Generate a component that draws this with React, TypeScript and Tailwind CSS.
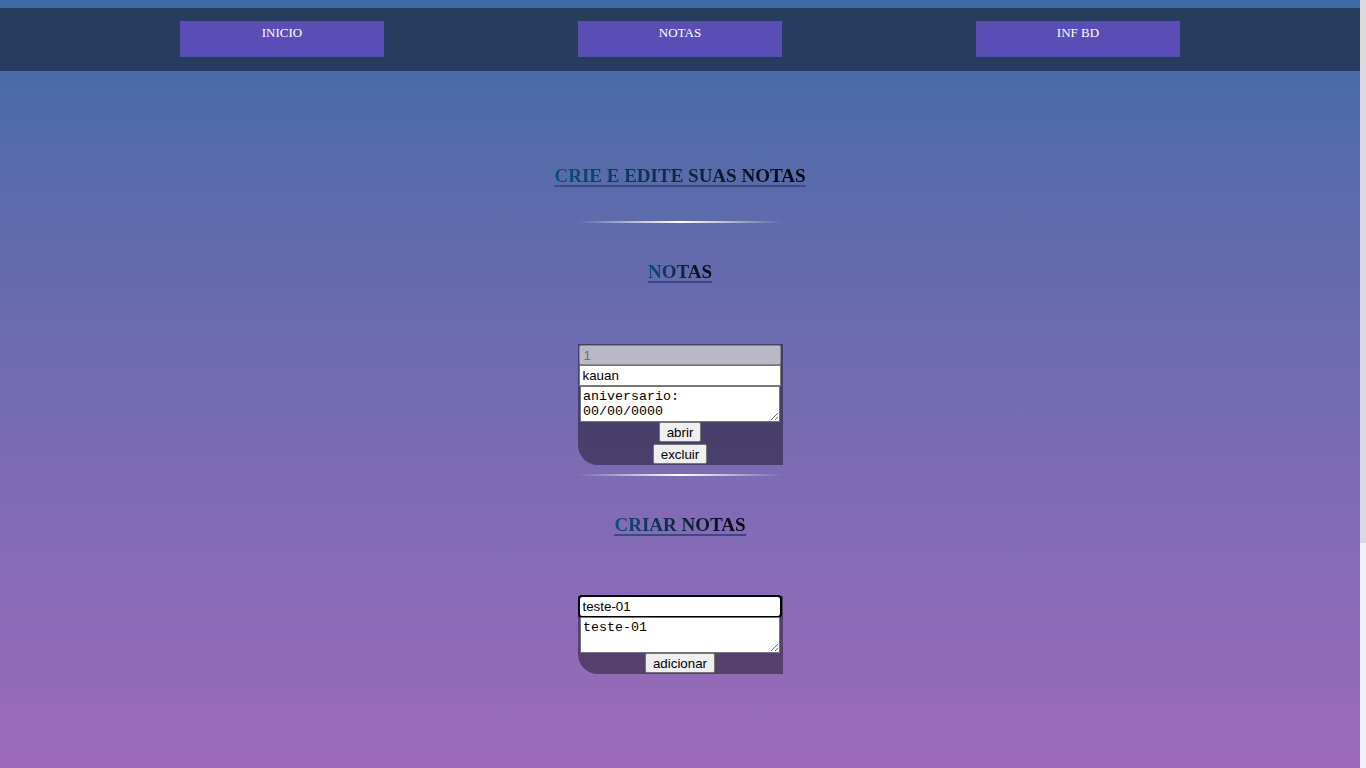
import { useState } from "react";

const NavButton = ({ text }: { text: string }) => (
  <button className="w-[204px] h-[36px] bg-[#5a4db5] text-white text-[13px] leading-[15px] pt-[4px] flex justify-center items-start font-['Liberation_Serif',serif]">
    {text}
  </button>
);

const Title = ({ text, className }: { text: string; className?: string }) => (
  <div className={`flex justify-center ${className ?? ""}`}>
    <h3 className="inline-block font-bold text-[19px] leading-[22px] font-['Liberation_Serif',serif] bg-linear-to-r from-[#0a4f78] to-[#05060f] bg-clip-text text-transparent underline decoration-[#3a4884] decoration-[2px] underline-offset-[3px]">
      {text}
    </h3>
  </div>
);

const Rule = ({ className }: { className?: string }) => (
  <div className={`flex justify-center ${className ?? ""}`}>
    <div className="w-[204px] h-[2px] bg-linear-to-r from-transparent via-white to-transparent" />
  </div>
);

const SmallButton = ({ text }: { text: string }) => (
  <button className="h-[20px] px-[7px] pt-[1px] bg-[#efefef] border border-[#767676] rounded-[2px] text-[13.33px] leading-[16px] text-black font-['Liberation_Sans',Arial,sans-serif]">
    {text}
  </button>
);

export default function App() {
  const [nome, setNome] = useState("teste-01");
  const [texto, setTexto] = useState("teste-01");

  return (
    <div className="flex min-h-screen w-full">
      <div className="flex-1 min-h-[768px] bg-linear-to-b from-[#3f6aa6] to-[#9c6abb] pt-[8px] pb-[94px]">
        <nav className="h-[63px] bg-[#263d5f] flex justify-center items-start gap-[194px] pt-[13px]">
          <NavButton text="INICIO" />
          <NavButton text="NOTAS" />
          <NavButton text="INF BD" />
        </nav>

        <Title text="CRIE E EDITE SUAS NOTAS" className="mt-[94px]" />
        <Rule className="mt-[34px]" />
        <Title text="NOTAS" className="mt-[38px]" />

        <div className="flex justify-center mt-[61px]">
          <div className="w-[205px] bg-black/40 rounded-bl-[20px] flex flex-col items-center pt-[1px] pb-[1px] font-['Liberation_Sans',Arial,sans-serif]">
            <input
              disabled
              value="1"
              className="w-[202px] h-[20px] bg-[#b9b9c6] border border-[#8a8a96] rounded-[2px] px-[4px] text-[13.33px] text-[#6d6d6d] self-start ml-[1px]"
            />
            <input
              defaultValue="kauan"
              className="w-[202px] h-[21px] bg-white border border-[#767676] px-[3px] text-[13.33px] text-black self-start ml-[1px]"
            />
            <textarea
              defaultValue={"aniversario:\n00/00/0000"}
              className="w-[200px] h-[36px] bg-white border border-[#767676] px-[2px] pt-[2px] text-[13.33px] leading-[15px] text-black font-['Liberation_Mono',monospace] resize-y overflow-hidden"
            />
            <div className="flex flex-col items-center gap-[2px]">
              <SmallButton text="abrir" />
              <SmallButton text="excluir" />
            </div>
          </div>
        </div>

        <Rule className="mt-[9px]" />
        <Title text="CRIAR NOTAS" className="mt-[38px]" />

        <div className="flex justify-center mt-[60px]">
          <div className="w-[205px] bg-black/40 rounded-bl-[20px] flex flex-col items-center pb-[1px] font-['Liberation_Sans',Arial,sans-serif]">
            <input
              autoFocus
              value={nome}
              onChange={(e) => setNome(e.target.value)}
              className="w-[202px] h-[21px] bg-white border border-[#767676] rounded-[3px] px-[3px] text-[13.33px] text-black outline-2 outline-black -outline-offset-1 self-start ml-[1px]"
            />
            <textarea
              value={texto}
              onChange={(e) => setTexto(e.target.value)}
              className="w-[200px] h-[36px] bg-white border border-[#767676] px-[2px] pt-[2px] text-[13.33px] leading-[15px] text-black font-['Liberation_Mono',monospace] resize-y overflow-hidden"
            />
            <SmallButton text="adicionar" />
          </div>
        </div>
      </div>
      <div className="w-[6px] flex flex-col">
        <div className="h-[543px] bg-[#dadada]" />
        <div className="flex-1 bg-[#f1f1f1]" />
      </div>
    </div>
  );
}
